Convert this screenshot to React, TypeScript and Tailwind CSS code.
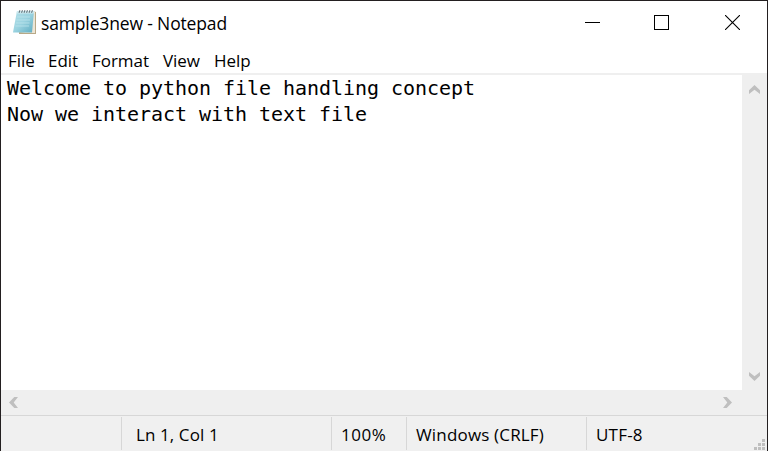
import React from "react";

function NotepadIcon() {
  return (
    <svg width="26" height="28" viewBox="0 0 26 28" className="block">
      <defs>
        <linearGradient id="page" x1="0" y1="0" x2="1" y2="1">
          <stop offset="0" stopColor="#b5e0e9" />
          <stop offset="0.5" stopColor="#9bd3e0" />
          <stop offset="1" stopColor="#5eacc1" />
        </linearGradient>
      </defs>
      <path d="M22 3.5L24 4V26H7V24H20Z" fill="#b8a987" />
      <path d="M21 4H23V25H7L20 23Z" fill="#ece5d5" />
      <path d="M5 3H22L20 24.5H1Z" fill="url(#page)" />
      <path d="M5 3H22L21.8 5.5H4.5Z" fill="#cdeaf0" />
      <path d="M5 9H18M4.5 12H18M4 15H17.5M3.5 18H17" stroke="#bce5ec" strokeWidth="0.8" />
      <path d="M7 4.7L8 2.2M9.5 4.7L10.5 2.2M12 4.7L13 2.2M14.5 4.7L15.5 2.2M17 4.7L18 2.2M19.5 4.7L20.5 2.2" stroke="#68777e" strokeWidth="1.1" />
    </svg>
  );
}

function Chevron({ className }: { className: string }) {
  return (
    <svg width="11" height="9" viewBox="0 0 11 9" className={className}>
      <path d="M0 5.3L5.5 0L11 5.3V9L5.5 4.7L0 9Z" fill="#bfbfbf" />
    </svg>
  );
}

const menus = [
  { label: "File", box: "w-[40px]" },
  { label: "Edit", box: "w-[44px]" },
  { label: "Format", box: "w-[71px]" },
  { label: "View", box: "w-[51px]" },
  { label: "Help", box: "w-[50px]" },
];

export default function App() {
  return (
    <div className="flex h-[451px] w-[768px] flex-col overflow-hidden border-x border-t border-[#231f20] bg-white font-['Open_Sans','Noto_Sans',sans-serif] text-black">
      <header className="flex h-[46px] shrink-0 items-start">
        <div className="ml-[11px] mt-[7px] w-[29px]">
          <NotepadIcon />
        </div>
        <h1 className="mt-[10px] flex-1 whitespace-nowrap text-[17.5px] leading-6 tracking-[-0.15px]">sample3new - Notepad</h1>
        <div className="mr-[27px] mt-[14px] flex gap-[54px]">
          <svg width="15" height="15" shapeRendering="crispEdges">
            <path d="M0 7.5H15" stroke="#000" />
          </svg>
          <svg width="15" height="15" shapeRendering="crispEdges">
            <rect x="0.5" y="0.5" width="14" height="14" fill="none" stroke="#000" />
          </svg>
          <svg width="15" height="15" className="ml-[2px]">
            <path d="M0 0L15 15M15 0L0 15" stroke="#000" strokeWidth="1.1" />
          </svg>
        </div>
      </header>
      <nav className="flex h-[26px] shrink-0 pl-[7px] pt-[1px] text-[17px] leading-[26px]">
        {menus.map((m) => (
          <span key={m.label} className={m.box + " whitespace-nowrap tracking-[-0.05px]"}>{m.label}</span>
        ))}
      </nav>
      <main className="flex h-[317px] shrink-0">
        <pre className="flex-1 border-t-2 border-[#efefef] pl-[6px] font-['DejaVu_Sans_Mono',monospace] text-[20px] leading-[26px] tracking-[-0.041px]">
          {"Welcome to python file handling concept\nNow we interact with text file"}
        </pre>
        <div className="flex w-[25px] flex-col items-center justify-between bg-[#efefef] pb-[9px] pt-[12px]">
          <Chevron className="" />
          <Chevron className="rotate-180" />
        </div>
      </main>
      <div className="flex h-[25px] shrink-0 items-center justify-between bg-[#efefef] pl-[7px] pr-[34px]">
        <Chevron className="-rotate-90" />
        <Chevron className="rotate-90" />
      </div>
      <footer className="flex h-[36px] shrink-0 border-t border-[#d7d7d7] bg-[#f0f0f0] pb-[1px] pt-[1px] text-[17px] leading-[36px]">
        <div className="w-[121px] border-r border-[#d7d7d7]" />
        <div className="w-[210px] border-r border-[#d7d7d7] pl-[14px] tracking-[0.1px]">Ln 1, Col 1</div>
        <div className="w-[75px] border-r border-[#d7d7d7] pl-[9px] tracking-[0.5px]">100%</div>
        <div className="w-[180px] border-r border-[#d7d7d7] pl-[9px] tracking-[0.17px]">Windows (CRLF)</div>
        <div className="flex-1 pl-[9px] tracking-[0.2px]">UTF-8</div>
        <svg width="11" height="11" className="mr-[2px] self-end" fill="#bfbfbf">
          <path d="M8 0h3v3h-3zM4 4h3v3h-3zM8 4h3v3h-3zM0 8h3v3h-3zM4 8h3v3h-3zM8 8h3v3h-3z" />
        </svg>
      </footer>
    </div>
  );
}
